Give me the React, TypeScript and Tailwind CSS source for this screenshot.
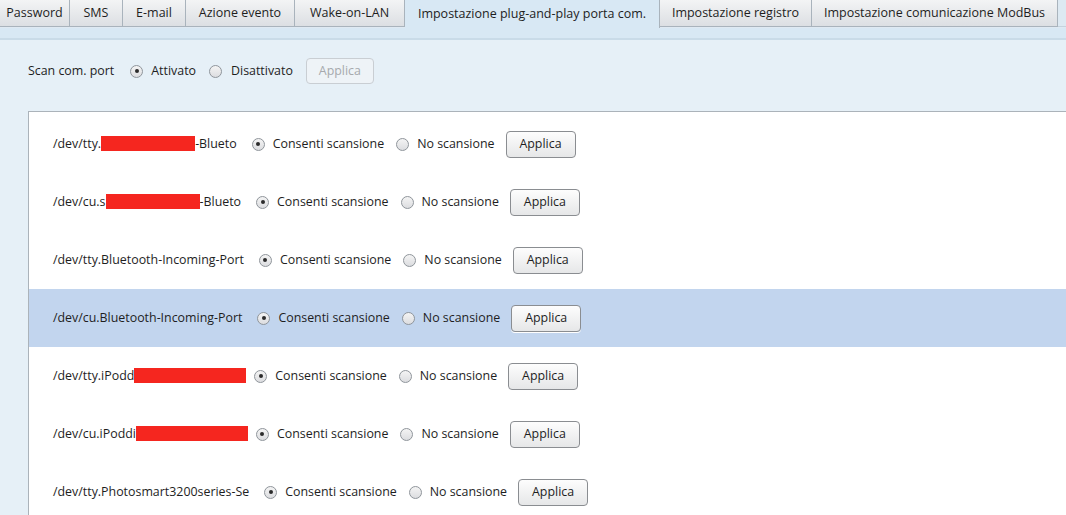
import React from 'react'

const tabs = [
  { label: 'Password', w: 70 },
  { label: 'SMS', w: 53 },
  { label: 'E-mail', w: 63 },
  { label: 'Azione evento', w: 109 },
  { label: 'Wake-on-LAN', w: 110 },
  { label: 'Impostazione plug-and-play porta com.', w: 255, active: true },
  { label: 'Impostazione registro', w: 152 },
  { label: 'Impostazione comunicazione ModBus', w: 246 },
]

const ports = [
  { prefix: '/dev/tty.', hidden: 94, suffix: '-Blueto' },
  { prefix: '/dev/cu.s', hidden: 94, suffix: '-Blueto' },
  { prefix: '/dev/tty.Bluetooth-Incoming-Port', hidden: 0, suffix: '' },
  { prefix: '/dev/cu.Bluetooth-Incoming-Port', hidden: 0, suffix: '', selected: true },
  { prefix: '/dev/tty.iPodd', hidden: 112, suffix: '', tight: true },
  { prefix: '/dev/cu.iPoddi', hidden: 112, suffix: '', tight: true },
  { prefix: '/dev/tty.Photosmart3200series-Se', hidden: 0, suffix: '' },
]

function Radio({ checked }: { checked?: boolean }) {
  return (
    <span className="w-[13px] h-[13px] rounded-full border border-[#8f959b] bg-gradient-to-b from-[#f4f4f4] to-[#dcdde0] flex items-center justify-center shrink-0">
      {checked && <span className="w-[4px] h-[4px] rounded-full bg-[#2b2b2b]" />}
    </span>
  )
}

function Button({ disabled }: { disabled?: boolean }) {
  return disabled ? (
    <button className="h-[26px] w-[68px] rounded-[4px] border border-[#c9ced3] bg-[#eef3f7] text-[#a6a9ad]">
      Applica
    </button>
  ) : (
    <button className="h-[27px] w-[70px] rounded-[4px] border border-[#8a8d91] bg-gradient-to-b from-[#fdfdfd] to-[#e6e7e8] text-[#1e1e1e] shadow-[0_1px_0_#ffffff]">
      Applica
    </button>
  )
}

export default function App() {
  return (
    <div className="w-[1066px] h-[515px] overflow-hidden bg-[#e6f0f7] text-[12.4px] text-[#1e1e1e] font-['Open_Sans',sans-serif]">
      {/* Tabs */}
      <div className="flex h-[28px] bg-[#dfe9f2]">
        {tabs.map((t) =>
          t.active ? (
            <div
              key={t.label}
              style={{ width: t.w }}
              className="h-[28px] bg-[#d8e8f4] border-r border-[#a9b3bc] flex items-center justify-center text-[12.5px] shrink-0"
            >
              {t.label}
            </div>
          ) : (
            <div
              key={t.label}
              style={{ width: t.w }}
              className="h-[27px] bg-gradient-to-b from-[#f3f4f5] to-[#dcdfe3] border-r border-b border-[#a9b3bc] flex items-center justify-center text-[12.5px] shrink-0"
            >
              {t.label}
            </div>
          )
        )}
        <div className="flex-1 h-[27px] border-b border-[#c4d2dd] bg-[#dde9f2]" />
      </div>
      <div className="h-[10px] bg-[#d8e8f4]" />
      <div className="h-[2px] bg-[#c9dbe8]" />

      {/* Scan com. port */}
      <div className="flex items-center h-[46px] mt-[8px] pl-[28px]">
        <span>Scan com. port</span>
        <span className="ml-[16px] mr-[8px]"><Radio checked /></span>
        <span>Attivato</span>
        <span className="ml-[13px] mr-[9px]"><Radio /></span>
        <span>Disattivato</span>
        <span className="ml-[13px]"><Button disabled /></span>
      </div>

      {/* Port list */}
      <div className="ml-[28px] mt-[17px] bg-white border-l border-t border-[#abb3ba] pt-[3px]">
        {ports.map((p, i) => (
          <div
            key={i}
            className={`flex items-center h-[58px] pl-[24px] ${p.selected ? 'bg-[#c2d5ee]' : ''}`}
          >
            <span className="flex items-center">
              {p.prefix}
              {p.hidden > 0 && (
                <span style={{ width: p.hidden }} className="inline-block h-[15px] bg-[#f5261f]" />
              )}
              {p.suffix}
            </span>
            <span className={`${p.tight ? 'ml-[8px]' : 'ml-[15px]'} mr-[8px]`}><Radio checked /></span>
            <span>Consenti scansione</span>
            <span className="ml-[12px] mr-[8px]"><Radio /></span>
            <span>No scansione</span>
            <span className="ml-[11px]"><Button /></span>
          </div>
        ))}
      </div>
    </div>
  )
}
